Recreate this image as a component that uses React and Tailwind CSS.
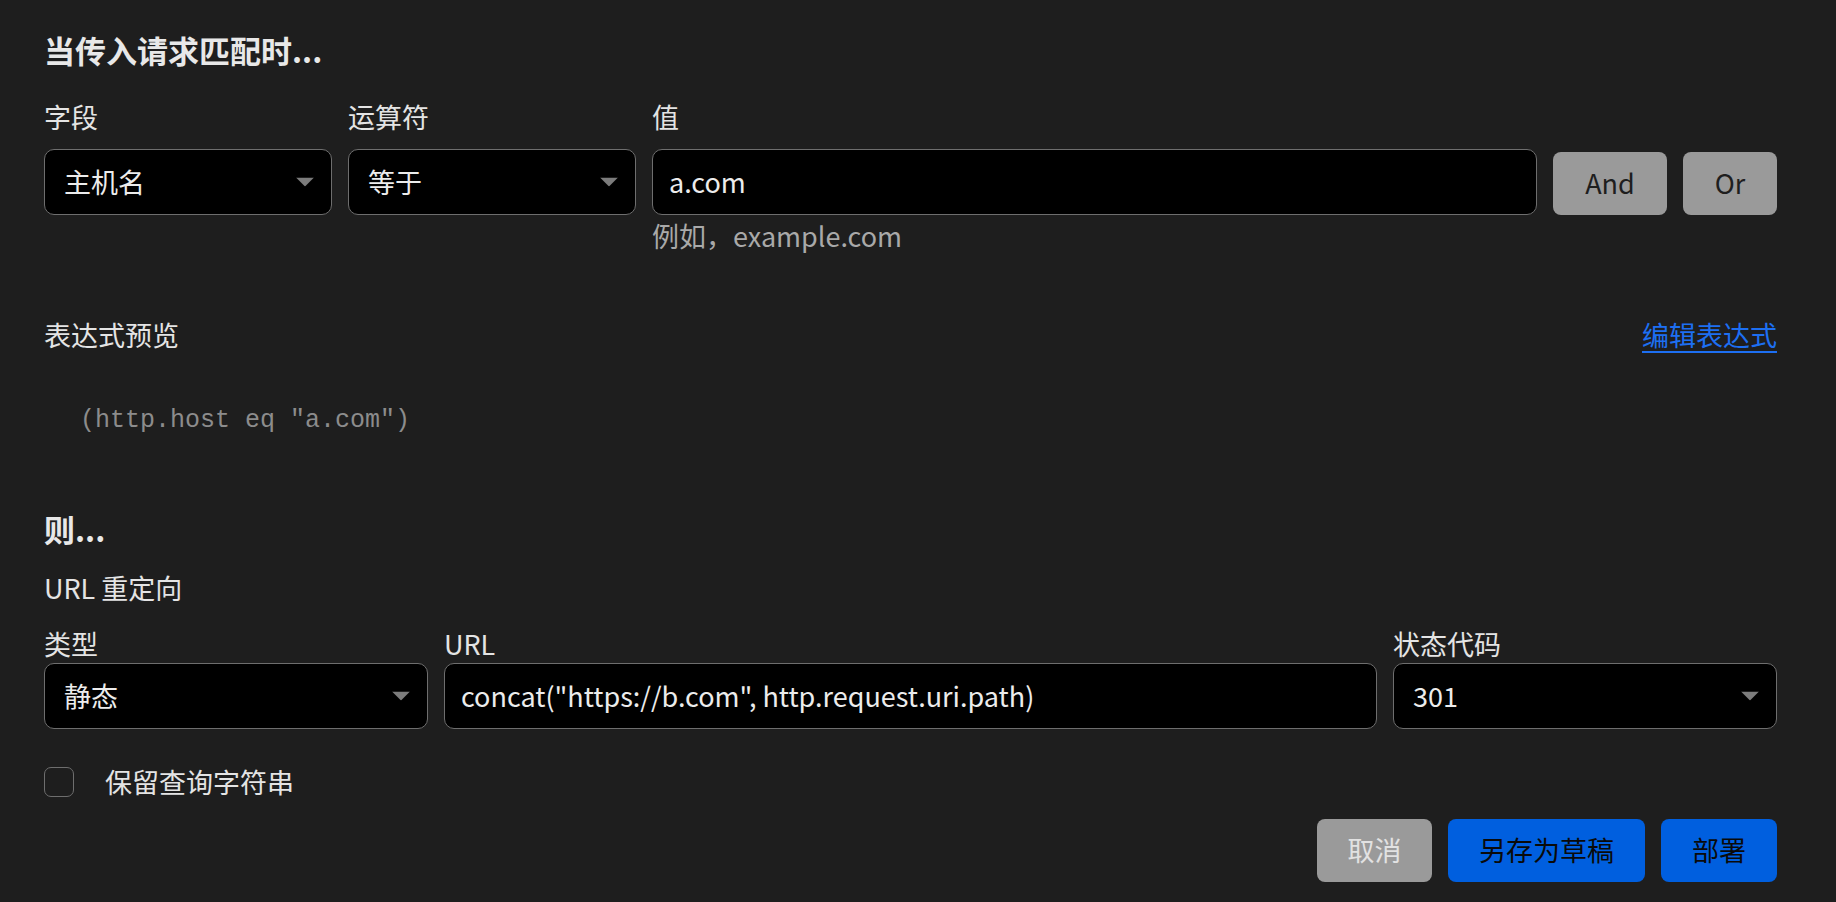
import React from 'react';

const cjk = 'font-["Noto_Sans_CJK_SC",sans-serif]';

// dropdown look-alike with the grey caret on the right
function SelectBox({ value, className = '' }) {
  return (
    <div className={`relative flex items-center h-[66px] bg-black border border-[#6e6e6e] rounded-[10px] pl-[19px] pr-[50px] text-[#ececec] ${className}`}>
      <span>{value}</span>
      <svg className="absolute right-[17px] top-1/2 -translate-y-1/2" width="18" height="9" viewBox="0 0 18 9">
        <polygon points="0,0 18,0 9,9" fill="#7c7c7c" />
      </svg>
    </div>
  );
}

function TextBox({ value, className = '' }) {
  return (
    <div className={`flex items-center h-[66px] bg-black border border-[#6e6e6e] rounded-[10px] pl-[16px] text-[#ececec] ${className}`}>
      {value}
    </div>
  );
}

function Label({ children }) {
  return <div className="leading-[36px] text-[#e4e4e4] whitespace-nowrap">{children}</div>;
}

export default function App() {
  return (
    <div className={`min-h-screen bg-[#1e1e1e] pl-[44px] pr-[59px] pt-[30px] text-[27px] ${cjk}`}>
      {/* match section */}
      <h2 className="text-[31px] font-bold leading-[40px] text-[#e8e8e8]">当传入请求匹配时...</h2>

      <div className="flex gap-4 mt-[29px]">
        <div className="w-[288px] shrink-0">
          <Label>字段</Label>
          <SelectBox value="主机名" className="mt-[14px]" />
        </div>
        <div className="w-[288px] shrink-0">
          <Label>运算符</Label>
          <SelectBox value="等于" className="mt-[14px]" />
        </div>
        <div className="flex-1">
          <Label>值</Label>
          <TextBox value="a.com" className="mt-[14px]" />
          <div className="mt-[3px] leading-[36px] text-[#a9a9a9]">例如，example.com</div>
        </div>
        <div className="flex gap-4 pt-[53px]">
          <button className="h-[63px] w-[114px] rounded-[8px] bg-[#9a9a9a] text-[#1e1e1e]">And</button>
          <button className="h-[63px] w-[94px] rounded-[8px] bg-[#9a9a9a] text-[#1e1e1e]">Or</button>
        </div>
      </div>

      <div className="flex items-center justify-between mt-[63px] leading-[36px]">
        <span className="text-[#e4e4e4]">表达式预览</span>
        <a href="#" className="text-[#1d6ff2] underline decoration-2 underline-offset-[5px]">编辑表达式</a>
      </div>

      <div className="mt-[50px] pl-[36px] leading-[36px] text-[25px] text-[#8c8c8c] font-['Liberation_Mono',monospace]">
        (http.host eq "a.com")
      </div>

      {/* action section */}
      <h2 className="mt-[70px] text-[31px] font-bold leading-[40px] text-[#e8e8e8]">则...</h2>
      <div className="mt-[21px] leading-[36px] text-[#e4e4e4]">URL 重定向</div>

      <div className="flex gap-4 mt-[20px]">
        <div className="w-[384px] shrink-0">
          <Label>类型</Label>
          <SelectBox value="静态" className="mt-[1px]" />
        </div>
        <div className="flex-1">
          <Label>URL</Label>
          <TextBox value={'concat("https://b.com", http.request.uri.path)'} className="mt-[1px]" />
        </div>
        <div className="w-[384px] shrink-0">
          <Label>状态代码</Label>
          <SelectBox value="301" className="mt-[1px]" />
        </div>
      </div>

      <label className="flex items-center gap-[31px] mt-[35px] h-[36px]">
        <span className="w-[30px] h-[30px] rounded-[7px] border border-[#6e6e6e]" />
        <span className="text-[#e4e4e4]">保留查询字符串</span>
      </label>

      <div className="flex justify-end gap-4 mt-[19px]">
        <button className="h-[63px] w-[115px] rounded-[8px] bg-[#9a9a9a] text-[#e2e2e2]">取消</button>
        <button className="h-[63px] w-[197px] rounded-[8px] bg-[#005fdf] text-[#0a0a0a]">另存为草稿</button>
        <button className="h-[63px] w-[116px] rounded-[8px] bg-[#005fdf] text-[#0a0a0a]">部署</button>
      </div>
    </div>
  );
}
